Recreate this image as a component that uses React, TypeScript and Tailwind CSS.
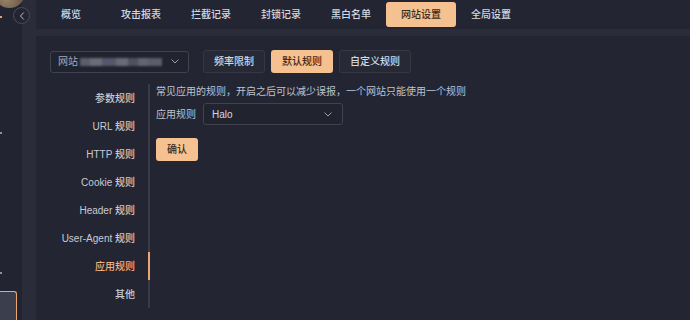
import React from "react";

const NAV_ITEMS = ["概览", "攻击报表", "拦截记录", "封锁记录", "黑白名单", "网站设置", "全局设置"];
const ACTIVE_NAV = "网站设置";

const RULE_TABS = ["频率限制", "默认规则", "自定义规则"];
const ACTIVE_TAB = "默认规则";

const MENU_ITEMS = ["参数规则", "URL 规则", "HTTP 规则", "Cookie 规则", "Header 规则", "User-Agent 规则", "应用规则", "其他"];
const ACTIVE_MENU = "应用规则";

const FONT = { fontFamily: '"Liberation Sans", "Noto Sans CJK SC", sans-serif' };

function Chevron({ className = "" }: { className?: string }) {
  return (
    <svg width="8" height="5" viewBox="0 0 8 5" className={className} fill="none">
      <path d="M0.8 0.8 L4 4 L7.2 0.8" stroke="#9a9eab" strokeWidth="1" strokeLinecap="round" strokeLinejoin="round" />
    </svg>
  );
}

function Sidebar() {
  return (
    <div className="relative w-[22px] shrink-0 bg-[#222431]">
      <div className="absolute -left-[6px] -top-[23px] h-[31px] w-[31px] rounded-full bg-[radial-gradient(circle_at_40%_70%,#9a8468,#5e5042_70%,#3a3530)]" />
      <div className="absolute left-0 top-[16px] h-[2px] w-[2px] bg-[#e8a060]" />
      <div className="absolute left-0 top-[132px] h-[2px] w-[2px] bg-[#8d90a0]" />
      <div className="absolute left-0 top-[272px] h-[2px] w-[2px] bg-[#8d90a0]" />
      <div className="absolute bottom-0 left-0 h-[29px] w-[17px] rounded-tr-[3px] border-r-[1.5px] border-t-[1.5px] border-[#e9a772] bg-[#3b3e4c]" />
    </div>
  );
}

function TopNav() {
  return (
    <div className="flex h-[29px] shrink-0 items-center bg-[#232532]">
      {NAV_ITEMS.map((item) =>
        item === ACTIVE_NAV ? (
          <div
            key={item}
            className="flex h-[25px] w-[70px] items-center justify-center rounded-[3px] bg-[#f6c190] text-[10px] font-medium text-[#3a2a1c]"
          >
            {item}
          </div>
        ) : (
          <div key={item} className="flex h-[25px] w-[70px] items-center justify-center text-[10px] font-medium text-[#d6d9e1]">
            {item}
          </div>
        )
      )}
    </div>
  );
}

function SiteSelect() {
  return (
    <div className="flex h-[22px] w-[139px] items-center rounded-[3px] border border-[#40434f] bg-[#21232f] pl-[7px] pr-[9px]">
      <span className="text-[10px] text-[#a6aabb]">网站</span>
      <div className="ml-[2px] flex h-[8px] items-center blur-[0.8px]">
        <div className="h-[8px] w-[10px] bg-[#5c5f6b]" />
        <div className="h-[8px] w-[12px] bg-[#6a6d78]" />
        <div className="h-[8px] w-[14px] bg-[#55586a]" />
        <div className="h-[8px] w-[12px] bg-[#686b77]" />
        <div className="h-[8px] w-[10px] bg-[#4e5160]" />
        <div className="h-[8px] w-[10px] bg-[#62656f]" />
        <div className="h-[8px] w-[14px] bg-[#5a5d6a]" />
      </div>
      <Chevron className="ml-auto" />
    </div>
  );
}

function RuleTabs() {
  return (
    <div className="flex gap-[6px]">
      {RULE_TABS.map((tab) =>
        tab === ACTIVE_TAB ? (
          <div
            key={tab}
            className="flex h-[23px] items-center rounded-[3px] bg-[#f6c190] px-[11px] text-[10px] font-medium text-[#3a2a1c]"
          >
            {tab}
          </div>
        ) : (
          <div
            key={tab}
            className="flex h-[23px] items-center rounded-[3px] border border-[#363945] bg-[#272935] px-[10px] text-[10px] font-medium text-[#d6d9e1]"
          >
            {tab}
          </div>
        )
      )}
    </div>
  );
}

function SideMenu() {
  return (
    <div className="w-[100px] shrink-0 border-r-2 border-[#393c48]">
      {MENU_ITEMS.map((item) => (
        <div
          key={item}
          className={
            item === ACTIVE_MENU
              ? "relative flex h-[28px] items-center justify-end pr-[13px] text-[10px] font-medium text-[#f0b27c]"
              : "flex h-[28px] items-center justify-end pr-[13px] text-[10px] font-medium text-[#c7cbd5]"
          }
        >
          {item}
          {item === ACTIVE_MENU && <div className="absolute -right-[2px] top-0 h-[28px] w-[2px] bg-[#e9a772]" />}
        </div>
      ))}
    </div>
  );
}

function RulePanel() {
  return (
    <div className="flex flex-col pl-[6px]">
      <p className="text-[10px] leading-[16px] text-[#bfc3ce]">常见应用的规则，开启之后可以减少误报，一个网站只能使用一个规则</p>
      <div className="mt-[3px] flex items-center">
        <span className="w-[47px] text-[10px] text-[#bfc3ce]">应用规则</span>
        <div className="flex h-[22px] w-[140px] items-center rounded-[3px] border border-[#40434f] bg-[#21232f] pl-[8px] pr-[10px]">
          <span className="text-[10px] text-[#d6d9e1]">Halo</span>
          <Chevron className="ml-auto" />
        </div>
      </div>
      <div className="mt-[13px]">
        <button className="flex h-[23px] w-[42px] items-center justify-center rounded-[3px] bg-[#f6c190] text-[10px] font-medium text-[#3a2a1c]">
          确认
        </button>
      </div>
    </div>
  );
}

export default function App() {
  return (
    <div className="relative flex h-[320px] w-[690px] overflow-hidden bg-[#2a2c3a]" style={FONT}>
      <Sidebar />
      <div className="flex min-w-0 flex-1 flex-col gap-[7px] pl-[14px]">
        <TopNav />
        <div className="flex-1 bg-[#232532] pl-[14px] pt-[14px]">
          <div className="flex items-center gap-[14px]">
            <SiteSelect />
            <RuleTabs />
          </div>
          <div className="mt-[11px] flex">
            <SideMenu />
            <RulePanel />
          </div>
        </div>
      </div>
      <div className="absolute left-[13px] top-[7px] flex h-[17px] w-[17px] items-center justify-center rounded-full border border-[#4a4d5b] bg-[#232532]">
        <svg width="6" height="8" viewBox="0 0 6 8" fill="none">
          <path d="M4.5 0.8 L1.5 4 L4.5 7.2" stroke="#b8bcc8" strokeWidth="1" strokeLinecap="round" strokeLinejoin="round" />
        </svg>
      </div>
    </div>
  );
}
